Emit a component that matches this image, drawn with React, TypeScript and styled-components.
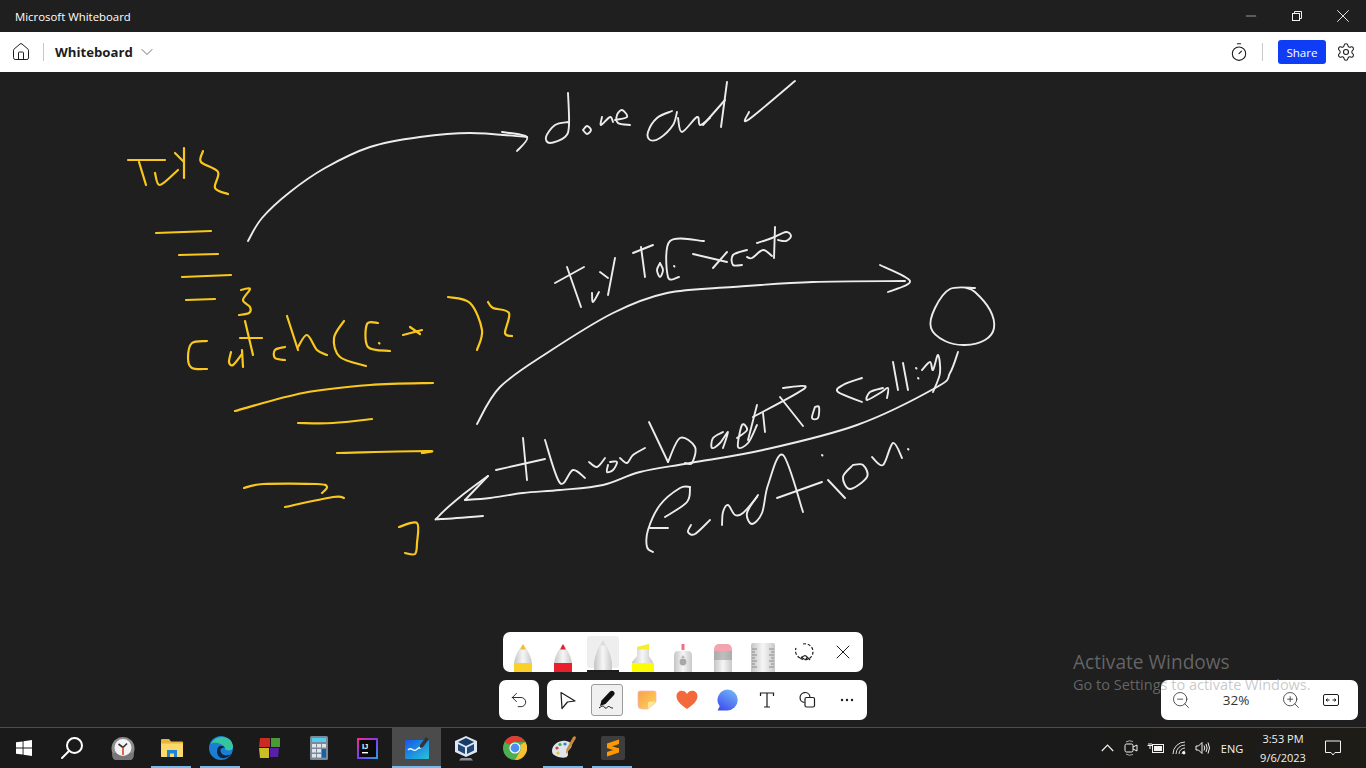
import React from "react";
import styled, { createGlobalStyle } from "styled-components";
import { ChevronDown, House, Minus, Settings, Timer, Undo2, X, ZoomIn, ZoomOut } from "lucide-react";

const GlobalStyle = createGlobalStyle`
  html, body { margin: 0; padding: 0; background: #1f1f1f; overflow: hidden; }
  * { box-sizing: border-box; }
`;

const FONT = `"Open Sans", "Noto Sans", "Liberation Sans", sans-serif`;

const Page = styled.div`
  width: 1366px;
  height: 768px;
  display: flex;
  flex-direction: column;
  font-family: ${FONT};
`;

const TitleBar = styled.div`
  height: 32px;
  flex: none;
  display: flex;
  align-items: center;
  justify-content: space-between;
  background: #1f1f1f;
  color: #fff;
  padding-left: 15px;
  font-size: 11.4px;
`;

const WindowButtons = styled.div`
  display: flex;
`;

const WindowButton = styled.div`
  width: 46px;
  height: 32px;
  display: flex;
  align-items: center;
  justify-content: center;
  color: ${(p: { $dim?: boolean }) => (p.$dim ? "#9a9a9a" : "#f2f2f2")};
`;

const AppBar = styled.div`
  height: 40px;
  flex: none;
  display: flex;
  align-items: center;
  background: #fff;
  color: #1c1c1c;
`;

const HomeButton = styled.div`
  width: 41px;
  display: flex;
  justify-content: center;
  margin-right: 2px;
`;

const BarDivider = styled.div`
  width: 1px;
  height: 18px;
  background: #c8c8c8;
`;

const BoardName = styled.div`
  margin-left: 11px;
  font-size: 13.2px;
  font-weight: 700;
`;

const ChevronWrap = styled.div`
  margin-left: 4px;
  display: flex;
  color: #555;
`;

const BarRight = styled.div`
  margin-left: auto;
  display: flex;
  align-items: center;
`;

const TimerWrap = styled.div`
  display: flex;
  margin-right: 13px;
`;

const ShareButton = styled.div`
  width: 48px;
  height: 24px;
  margin-left: 15px;
  border-radius: 3px;
  background: #0f3cf5;
  color: #fff;
  font-size: 11.6px;
  font-weight: 500;
  display: flex;
  align-items: center;
  justify-content: center;
`;

const GearWrap = styled.div`
  width: 40px;
  display: flex;
  justify-content: center;
`;

const Canvas = styled.div`
  flex: 1;
  position: relative;
  background: #1f1f1f;
  overflow: hidden;
`;

const InkLayer = styled.svg`
  position: absolute;
  inset: 0;
`;

const Dock = styled.div`
  position: absolute;
  left: 499px;
  bottom: 7px;
  width: 368px;
  display: flex;
  flex-direction: column;
  align-items: center;
  gap: 8px;
`;

const PenTray = styled.div`
  display: flex;
  height: 40px;
  background: #fff;
  border-radius: 7px;
  overflow: hidden;
`;

const PenSlot = styled.div<{ $active?: boolean }>`
  width: 40px;
  height: 40px;
  position: relative;
  display: flex;
  justify-content: center;
  &::before {
    content: "";
    display: ${(p) => (p.$active ? "block" : "none")};
    position: absolute;
    left: 4px;
    right: 4px;
    top: 4px;
    bottom: 4px;
    background: #eee;
    border-radius: 3px;
  }
  &::after {
    content: "";
    display: ${(p) => (p.$active ? "block" : "none")};
    position: absolute;
    left: 4px;
    right: 4px;
    bottom: 0;
    height: 2px;
    background: #1c1c1c;
  }
  svg {
    position: relative;
  }
`;

const ToolRow = styled.div`
  width: 100%;
  display: flex;
  justify-content: space-between;
`;

const Pill = styled.div`
  height: 40px;
  background: #fff;
  border-radius: 7px;
  display: flex;
`;

const ToolSlot = styled.div<{ $active?: boolean }>`
  width: 40px;
  height: 40px;
  display: flex;
  align-items: center;
  justify-content: center;
  color: #1c1c1c;
  position: relative;
  &::before {
    content: "";
    display: ${(p) => (p.$active ? "block" : "none")};
    position: absolute;
    left: 4px;
    right: 4px;
    top: 4px;
    bottom: 4px;
    background: #f0f0f0;
    border: 1px solid #9a9a9a;
    border-radius: 3px;
  }
  svg {
    position: relative;
  }
`;

const ZoomPanel = styled.div`
  position: absolute;
  right: 8px;
  bottom: 7px;
  width: 197px;
  height: 40px;
  background: #fff;
  border-radius: 7px;
  display: flex;
  align-items: center;
  color: #1c1c1c;
`;

const ZoomCell = styled.div<{ $width: number }>`
  width: ${(p) => p.$width}px;
  display: flex;
  justify-content: center;
  font-size: 13.5px;
  color: #333;
`;

const Watermark = styled.div`
  position: absolute;
  left: 1073px;
  top: 577px;
  color: rgba(157, 157, 157, 0.56);
  pointer-events: none;
`;

const WatermarkTitle = styled.div`
  font-size: 19.1px;
  line-height: 26px;
`;

const WatermarkText = styled.div`
  font-size: 14.5px;
  line-height: 19px;
  white-space: nowrap;
`;

const Taskbar = styled.div`
  height: 41px;
  flex: none;
  display: flex;
  align-items: stretch;
  background: #1a1a1a;
  border-top: 1px solid #4d4d4d;
  padding-left: 2px;
  color: #f2f2f2;
`;

const StartCell = styled.div`
  width: 48px;
  display: flex;
  align-items: center;
  justify-content: center;
  margin-left: -2px;
  &:nth-child(2) {
    margin-left: 0;
    margin-right: 2px;
  }
`;

const AppCell = styled.div<{ $open?: boolean; $active?: boolean }>`
  width: 49px;
  position: relative;
  display: flex;
  align-items: center;
  justify-content: center;
  background: ${(p) => (p.$active ? "#4b4b4b" : "transparent")};
  &::after {
    content: "";
    display: ${(p) => (p.$open || p.$active ? "block" : "none")};
    position: absolute;
    bottom: 0;
    height: 2px;
    left: ${(p) => (p.$active ? "0" : "4px")};
    right: ${(p) => (p.$active ? "0" : "5px")};
    background: #76b9ed;
  }
`;

const Tray = styled.div`
  margin-left: auto;
  display: flex;
  align-items: center;
  padding-right: 16px;
  background: linear-gradient(90deg, #1a1a1a, #1e1c16);
`;

const TrayIcon = styled.div<{ $width: number }>`
  width: ${(p) => p.$width}px;
  display: flex;
  justify-content: center;
`;

const TrayLang = styled.div`
  width: 36px;
  text-align: center;
  font-size: 11px;
`;

const TrayClock = styled.div`
  width: 66px;
  text-align: center;
  font-size: 11px;
  line-height: 19px;
`;

type Pt = number[];

// catmull-rom through the sampled pen points, so strokes look like ink
const smooth = (pts: Pt[]) => {
  let d = `M${pts[0][0]} ${pts[0][1]}`;
  for (let i = 0; i < pts.length - 1; i++) {
    const p0 = pts[i - 1] || pts[i];
    const p1 = pts[i];
    const p2 = pts[i + 1];
    const p3 = pts[i + 2] || p2;
    const c1x = p1[0] + (p2[0] - p0[0]) / 6;
    const c1y = p1[1] + (p2[1] - p0[1]) / 6;
    const c2x = p2[0] - (p3[0] - p1[0]) / 6;
    const c2y = p2[1] - (p3[1] - p1[1]) / 6;
    d += ` C${c1x.toFixed(1)} ${c1y.toFixed(1)} ${c2x.toFixed(1)} ${c2y.toFixed(1)} ${p2[0]} ${p2[1]}`;
  }
  return d;
};

const yellowInk: Pt[][] = [
  [[128, 160], [165, 160]],
  [[139, 162], [146, 185]],
  [[155, 173], [160, 185], [178, 170]],
  [[175, 153], [184, 162]],
  [[184, 148], [184, 178]],
  [[203, 151], [201, 162], [218, 172], [215, 188], [228, 194]],
  [[156, 233], [211, 231]],
  [[179, 255], [218, 254]],
  [[182, 277], [231, 275]],
  [[186, 300], [215, 299]],
  [[241, 290], [250, 289], [243, 300], [250, 307], [249, 313], [239, 315]],
  [[207, 341], [192, 343], [188, 358], [192, 368], [207, 369]],
  [[231, 352], [229, 362], [233, 365], [242, 354]],
  [[242, 350], [243, 367]],
  [[245, 321], [253, 355]],
  [[240, 338], [262, 338]],
  [[285, 347], [275, 350], [275, 358], [285, 360]],
  [[287, 316], [298, 350]],
  [[298, 347], [307, 335], [317, 350], [327, 355]],
  [[344, 321], [334, 338], [340, 357], [366, 366]],
  [[378, 323], [367, 324], [368, 347], [390, 351]],
  [[379, 343], [379.5, 343.5]],
  [[403, 335], [422, 330]],
  [[410, 327], [420, 334]],
  [[448, 297], [470, 303], [482, 330], [477, 350]],
  [[488, 302], [493, 308], [509, 313], [505, 333], [512, 336]],
  [[235, 411], [303, 393], [370, 385], [433, 383]],
  [[298, 423], [333, 423], [372, 419]],
  [[337, 453], [427, 451], [422, 453]],
  [[244, 488], [263, 484], [317, 484], [327, 487], [322, 493]],
  [[285, 507], [333, 497], [344, 498]],
  [[399, 527], [417, 523], [417, 543], [415, 554], [405, 553]],
];

const whiteInk: Pt[][] = [
  // done out
  [[248, 241], [262, 218], [290, 192], [325, 168], [370, 147], [420, 137], [470, 133], [527, 137]],
  [[502, 132], [527, 137], [517, 151]],
  [[568, 93], [569, 125], [565, 137], [550, 143], [546, 137], [555, 125], [568, 122]],
  [[583, 130], [587, 126], [591, 130], [587, 134], [583, 130]],
  [[602, 117], [601, 125], [610, 117], [613, 122]],
  [[615, 120], [627, 117], [622, 110], [617, 115], [618, 123], [630, 125]],
  [[672, 111], [657, 118], [648, 132], [650, 140], [660, 138], [673, 125], [677, 112]],
  [[678, 118], [682, 132], [697, 117], [700, 125], [710, 118]],
  [[727, 82], [721, 127]],
  [[703, 125], [725, 100]],
  [[749, 112], [748, 120], [795, 81]],
  // try to execute
  [[555, 283], [584, 267]],
  [[567, 267], [581, 307]],
  [[592, 293], [593, 302], [599, 292]],
  [[600, 272], [608, 278]],
  [[615, 258], [608, 295]],
  [[633, 253], [653, 245]],
  [[641, 247], [645, 277]],
  [[660, 263], [657, 270], [660, 277], [663, 270], [660, 263]],
  [[704, 241], [670, 241], [668, 277], [679, 277]],
  [[674, 266], [674.5, 266.5]],
  [[693, 254], [727, 262]],
  [[727, 252], [713, 268]],
  [[747, 250], [733, 255], [733, 265], [742, 265]],
  [[747, 257], [752, 258], [763, 250], [772, 256]],
  [[775, 227], [774, 258]],
  [[757, 243], [772, 238], [786, 232], [791, 236], [786, 241], [778, 240]],
  // long arrow
  [[477, 424], [500, 387], [547, 353], [613, 313], [667, 293], [733, 287], [813, 282], [905, 281]],
  [[880, 265], [910, 281], [888, 292]],
  [[975, 288], [950, 289], [935, 308], [931, 328], [945, 341], [965, 345], [985, 340], [994, 328], [990, 310], [975, 292], [966, 288]],
  // throw back
  [[958, 352], [950, 373], [937, 387], [857, 425], [763, 450], [690, 463], [640, 472], [603, 485], [560, 490], [523, 493], [490, 498], [465, 500]],
  [[465, 500], [488, 476]],
  [[488, 476], [460, 497], [438, 517], [441, 519], [483, 516]],
  [[496, 470], [545, 459]],
  [[523, 438], [527, 480]],
  [[545, 440], [560, 483], [573, 470], [585, 478]],
  [[589, 462], [597, 467], [605, 458]],
  [[608, 465], [607, 472], [613, 470], [617, 462], [610, 462]],
  [[620, 458], [627, 463], [633, 455], [645, 448]],
  [[649, 422], [668, 462]],
  [[668, 462], [680, 438], [695, 447], [692, 463], [685, 463]],
  [[723, 432], [713, 438], [712, 448], [720, 443], [728, 432], [723, 448]],
  [[737, 438], [747, 430], [742, 425], [738, 447], [748, 443], [757, 425]],
  [[757, 405], [748, 440]],
  [[763, 413], [765, 432]],
  [[783, 388], [805, 388], [753, 417]],
  [[780, 397], [803, 426]],
  [[815, 407], [812, 418], [818, 418], [819, 407], [815, 407]],
  [[862, 378], [843, 385], [838, 392], [862, 402]],
  [[883, 388], [870, 392], [867, 400], [880, 393], [888, 388], [887, 398]],
  [[893, 362], [898, 390]],
  [[903, 363], [908, 390]],
  [[916, 368], [916.5, 368.5]],
  [[918, 378], [918.5, 378.5]],
  [[922, 370], [930, 362], [933, 370], [938, 355], [940, 373], [933, 392]],
  // function
  [[690, 487], [680, 488], [660, 505], [648, 530], [647, 547], [653, 552]],
  [[690, 487], [687, 502], [665, 517]],
  [[650, 528], [668, 528]],
  [[691, 525], [688, 532], [695, 534], [710, 520]],
  [[722, 525], [723, 512], [728, 505], [735, 515], [743, 513], [757, 497]],
  [[758, 495], [747, 513], [752, 524], [762, 513], [768, 485], [783, 455], [803, 512]],
  [[777, 498], [822, 482]],
  [[828, 480], [845, 498]],
  [[822, 455], [822.5, 455.5]],
  [[853, 465], [843, 477], [850, 489], [867, 477], [863, 465], [853, 465]],
  [[872, 457], [883, 465], [893, 443], [902, 458]],
  [[908, 449], [908.5, 449.5]],
];

const Ink = () => (
  <InkLayer width="1366" height="655" viewBox="0 72 1366 655" fill="none" strokeLinecap="round" strokeLinejoin="round">
    {yellowInk.map((s, i) => (
      <path key={i} d={smooth(s)} stroke="#f9c81e" strokeWidth="2.2" />
    ))}
    {whiteInk.map((s, i) => (
      <path key={i} d={smooth(s)} stroke="#ececec" strokeWidth="1.9" />
    ))}
  </InkLayer>
);

const SharedDefs = () => (
  <defs>
    <linearGradient id="penBody" x1="0" x2="1" y1="0" y2="0">
      <stop offset="0" stopColor="#c4c4c4" />
      <stop offset="0.5" stopColor="#f6f6f6" />
      <stop offset="1" stopColor="#c8c8c8" />
    </linearGradient>
    <linearGradient id="noteFill" x1="0" x2="1" y1="0" y2="1">
      <stop offset="0" stopColor="#f9a14a" />
      <stop offset="1" stopColor="#ffd35c" />
    </linearGradient>
    <linearGradient id="bubbleFill" x1="0.8" x2="0.2" y1="0" y2="1">
      <stop offset="0" stopColor="#72b7f5" />
      <stop offset="1" stopColor="#3e4ef0" />
    </linearGradient>
    <linearGradient id="boardFill" x1="0" x2="1" y1="0" y2="1">
      <stop offset="0" stopColor="#1558e8" />
      <stop offset="1" stopColor="#28c3d8" />
    </linearGradient>
  </defs>
);

const PenTip = ({ tip, band, top = 12 }: { tip: string; band: string; top?: number }) => (
  <svg width="40" height="40" viewBox="0 0 40 40">
    <path d={`M11 40 V33 C11 25 16 ${top + 5} 20 ${top} C24 ${top + 5} 29 25 29 33 V40Z`} fill="url(#penBody)" />
    <path d={`M17.2 ${top + 5.5} Q18.6 ${top + 2} 20 ${top} Q21.4 ${top + 2} 22.8 ${top + 5.5}Z`} fill={tip} />
    <path d="M11 31 H29 V40 H11Z" fill={band} />
  </svg>
);

const Highlighter = () => (
  <svg width="40" height="40" viewBox="0 0 40 40">
    <path d="M14 24 V15 L26 12 V24 L30 30 V40 H9 V30Z" fill="url(#penBody)" />
    <path d="M14 18 V15 L26 12 V17Z" fill="#f5ee2a" />
    <path d="M9 31 H31 V40 H9Z" fill="#fdfd00" />
  </svg>
);

const Laser = () => (
  <svg width="40" height="40" viewBox="0 0 40 40">
    <path d="M18.5 12 h3 v6 h-3Z" fill="#f04a66" opacity="0.8" />
    <path d="M11 40 V24 Q11 19 15 19 H25 Q29 19 29 24 V40Z" fill="url(#penBody)" />
    <circle cx="20" cy="30" r="3.4" fill="#a8a8a8" />
    <path d="M20 23 l2 3 h-4Z" fill="#b5b5b5" />
  </svg>
);

const Eraser = () => (
  <svg width="40" height="40" viewBox="0 0 40 40">
    <path d="M11 19 Q11 12 16 12 H24 Q29 12 29 19 V40 H11Z" fill="url(#penBody)" />
    <path d="M11 19 Q11 12 16 12 H24 Q29 12 29 19Z" fill="#f4a4ae" />
    <path d="M11 19 H29 V28 H11Z" fill="#9a9a9a" opacity="0.6" />
  </svg>
);

const Ruler = () => (
  <svg width="40" height="40" viewBox="0 0 40 40" stroke="#8c8c8c" strokeWidth="1">
    <path d="M8 13 Q8 11 10 11 H30 Q32 11 32 13 V40 H8Z" fill="url(#penBody)" stroke="none" />
    {[17, 20, 23, 26, 29, 32, 35].map((y) => (
      <path key={y} d={`M9 ${y} h${y % 2 ? 5 : 3} M31 ${y} h-${y % 2 ? 5 : 3}`} />
    ))}
  </svg>
);

const Lasso = () => (
  <svg width="22" height="22" viewBox="0 0 22 22" fill="none" stroke="#1c1c1c" strokeWidth="1.2">
    <path d="M11 3 A8 8 0 1 1 8 17" strokeDasharray="3 1.8" />
    <path d="M8 17 A8 8 0 0 1 4 7" strokeDasharray="3 1.8" />
    <path d="M9 17 Q13 13 15 16 Q15 19 12 18 L9 16 M15 16 L18 19" />
  </svg>
);

const CursorIcon = () => (
  <svg width="20" height="20" viewBox="0 0 20 20" fill="none" stroke="#1c1c1c" strokeWidth="1.2" strokeLinejoin="round">
    <path d="M4 2.5 L18 11 L10.5 12 L5 18.5Z" />
  </svg>
);

const InkPenIcon = () => (
  <svg width="20" height="20" viewBox="0 0 20 20" fill="none">
    <path d="M13 1.5 C15.5 -0.5 19 2.5 17 5 L8.5 14 L3 16 L4.5 10.5Z" fill="#111" />
    <path d="M2 18 C6 15 7 16 8 18 C10 19 11 15 13 17 C14 18 15 18 16 18" stroke="#111" strokeWidth="1" />
  </svg>
);

const NoteIcon = () => (
  <svg width="20" height="20" viewBox="0 0 20 20">
    <path d="M3 1 H17 Q19 1 19 3 V12 L11 19 H5 Q1 19 1 15 V3 Q1 1 3 1Z" fill="url(#noteFill)" stroke="#f3b6c2" strokeWidth="0.8" />
    <path d="M11 19 V13 Q11 11.5 13 11.5 H19Z" fill="#ffe79a" />
  </svg>
);

const HeartIcon = () => (
  <svg width="22" height="20" viewBox="0 0 22 20">
    <path d="M11 19 C4 14 0.5 10.5 0.5 6.2 C0.5 2.8 3.2 0.8 5.8 0.8 C8 0.8 9.8 2 11 4 C12.2 2 14 0.8 16.2 0.8 C18.8 0.8 21.5 2.8 21.5 6.2 C21.5 10.5 18 14 11 19Z" fill="#f4693c" />
  </svg>
);

const BubbleIcon = () => (
  <svg width="22" height="22" viewBox="0 0 21 21">
    <path d="M11 0.5 A10 10 0 1 1 10.5 20.5 H1.5 L3.5 16.5 A10 10 0 0 1 11 0.5Z" fill="url(#bubbleFill)" />
  </svg>
);

const SerifT = () => (
  <svg width="18" height="18" viewBox="0 0 18 18" fill="none" stroke="#1c1c1c" strokeWidth="1.2">
    <path d="M2.5 5 V2 H15.5 V5 M9 2 V16 M6 16 H12" />
  </svg>
);

const ShapesIcon = () => (
  <svg width="18" height="18" viewBox="0 0 18 18" fill="none" stroke="#1c1c1c" strokeWidth="1.2">
    <path d="M6.5 11.5 A5 5 0 1 1 12 5.8" />
    <rect x="7" y="6.5" width="9.5" height="9.5" rx="1.5" />
  </svg>
);

const DotsIcon = () => (
  <svg width="14" height="4" viewBox="0 0 14 4" fill="#1c1c1c">
    <circle cx="2" cy="2" r="1.2" />
    <circle cx="7" cy="2" r="1.2" />
    <circle cx="12" cy="2" r="1.2" />
  </svg>
);

const FitIcon = () => (
  <svg width="16" height="12" viewBox="0 0 16 12" fill="none" stroke="#1c1c1c" strokeWidth="1">
    <rect x="0.5" y="0.5" width="15" height="11" rx="1.5" />
    <path d="M3 6 H6.5 M3 6 L4.6 4.6 M3 6 L4.6 7.4 M13 6 H9.5 M13 6 L11.4 4.6 M13 6 L11.4 7.4" />
  </svg>
);

const RestoreIcon = () => (
  <svg width="10" height="10" viewBox="0 0 10 10" fill="none" stroke="currentColor" strokeWidth="1">
    <rect x="0.5" y="2.5" width="7" height="7" />
    <path d="M2.5 2.5 V0.5 H9.5 V7.5 H7.5" />
  </svg>
);

const WindowsLogo = () => (
  <svg width="16" height="16" viewBox="0 0 16 16" fill="#fff">
    <path d="M0 2.3 L6.6 1.4 V7.5 H0Z M7.5 1.2 L16 0 V7.5 H7.5Z M0 8.4 H6.6 V14.6 L0 13.7Z M7.5 8.4 H16 V16 L7.5 14.8Z" />
  </svg>
);

const SearchIcon = () => (
  <svg width="24" height="24" viewBox="0 0 24 24" fill="none" stroke="#fff" strokeWidth="2">
    <circle cx="14.5" cy="9.5" r="7.5" />
    <path d="M9 15 L2 22" strokeLinecap="round" />
  </svg>
);

const ClockApp = () => (
  <svg width="24" height="24" viewBox="0 0 24 24">
    <circle cx="12" cy="12.5" r="11.5" fill="#8d8d8d" />
    <path d="M1 17 H23 Q23 23 20 24 H4 Q1 23 1 17Z" fill="#777" />
    <circle cx="12" cy="11.5" r="8.5" fill="#f4f4f4" />
    <path d="M12 11.5 L7.5 8 M12 11.5 L16 7.5" stroke="#333" strokeWidth="1.6" />
    <path d="M12 11.5 V19" stroke="#d8432a" strokeWidth="1.6" />
  </svg>
);

const FolderApp = () => (
  <svg width="22" height="20" viewBox="0 0 22 20">
    <path d="M0 2 Q0 1 1 1 H8 L10 3.5 H21 Q22 3.5 22 4.5 V18 Q22 19 21 19 H1 Q0 19 0 18Z" fill="#e8b53c" />
    <path d="M0 5.5 H22 V18 Q22 19 21 19 H1 Q0 19 0 18Z" fill="#fbd96b" />
    <path d="M6 12 H16 V19 H13 V15.5 H9 V19 H6Z" fill="#1b86d8" />
  </svg>
);

const EdgeApp = () => (
  <svg width="24" height="24" viewBox="0 0 24 24">
    <circle cx="12" cy="12" r="12" fill="#1a7fd4" />
    <path d="M2 8 C5 1 14 -1 20 3 C24 6 25 12 22 14 C19 15 16 14 16 12 C15 8 6 5 2 8Z" fill="#35c6a0" />
    <path d="M8 15 C8 10 13 8 16 12 C14 11 11 12 11.5 15 C12 19 17 21 22 18 C19 23 8 25 8 15Z" fill="#10243f" />
    <path d="M22 14 C23 12 24 9 22 6 C24 9 24 12 22 14Z" fill="#7be06b" />
  </svg>
);

const TilesApp = () => (
  <svg width="22" height="22" viewBox="0 0 22 22">
    <path d="M1 1 H11 V10 H0Z" fill="#c92b22" />
    <path d="M12 1 H21 V10 H12Z" fill="#4c9a34" />
    <path d="M0 11 H10 V21 H1Z" fill="#c9bf24" />
    <path d="M11 11 H20 L19 20 H11Z" fill="#5a1fa8" />
  </svg>
);

const CalcApp = () => (
  <svg width="18" height="24" viewBox="0 0 18 24">
    <rect width="18" height="24" rx="1.5" fill="#7b8a96" />
    <rect x="2" y="2" width="14" height="4" fill="#52cdf0" />
    <path d="M2 8 h4 v3.5 h-4Z M7 8 h4 v3.5 h-4Z M2 13 h4 v3.5 h-4Z M7 13 h4 v3.5 h-4Z M2 18 h4 v3.5 h-4Z M7 18 h4 v3.5 h-4Z M12 8 h4 v3.5 h-4Z" fill="#dde4ea" />
    <rect x="12" y="13" width="4" height="8.5" fill="#1562a8" />
  </svg>
);

const IntellijApp = () => (
  <svg width="21" height="21" viewBox="0 0 21 21">
    <defs>
      <linearGradient id="ijEdge" x1="0" x2="1" y1="0" y2="1">
        <stop offset="0" stopColor="#fc2d7f" />
        <stop offset="0.5" stopColor="#7b3cf0" />
        <stop offset="1" stopColor="#2b9fe8" />
      </linearGradient>
    </defs>
    <rect width="21" height="21" fill="url(#ijEdge)" />
    <rect x="2" y="2" width="17" height="17" fill="#0a0a0a" />
    <text x="5" y="10.5" fontFamily="Liberation Sans, sans-serif" fontWeight="700" fontSize="7.5" fill="#fff">IJ</text>
    <rect x="5" y="14" width="6" height="1.4" fill="#fff" />
  </svg>
);

const BoardApp = () => (
  <svg width="26" height="24" viewBox="0 0 26 24">
    <rect x="1" y="4" width="24" height="19" rx="1" fill="url(#boardFill)" />
    <path d="M4 14 C7 10 9 16 12 14 C15 12 14 11 17 12" fill="none" stroke="#fff" strokeWidth="1.4" />
    <path d="M16 9 L22 1 L25 3 L19 11 L16 12Z" fill="#333" />
  </svg>
);

const VboxApp = () => (
  <svg width="24" height="26" viewBox="0 0 24 26">
    <path d="M12 1 L23 6 V17 L12 22 L1 17 V6Z" fill="#dfe6f0" />
    <path d="M12 3 L20 7 L12 11 L4 7Z" fill="#173a66" />
    <path d="M4 9 L11 12.5 V19 L4 15.5Z M13 12.5 L20 9 V15.5 L13 19Z" fill="#1f4778" />
    <path d="M7 23 H17 L19 25.5 H5Z" fill="#8a8f98" />
  </svg>
);

const ChromeApp = () => (
  <svg width="24" height="24" viewBox="0 0 24 24">
    <circle cx="12" cy="12" r="12" fill="#4caf50" />
    <path d="M12 0 A12 12 0 0 1 22.4 6 H12 A6 6 0 0 0 6.8 9 L1.6 6 A12 12 0 0 1 12 0Z" fill="#e53935" />
    <path d="M22.4 6 A12 12 0 0 1 12 24 L17.2 15 A6 6 0 0 0 17.2 9 Z" fill="#fbc02d" />
    <circle cx="12" cy="12" r="5.6" fill="#fff" />
    <circle cx="12" cy="12" r="4.4" fill="#4d8ff0" />
  </svg>
);

const PaintApp = () => (
  <svg width="26" height="26" viewBox="0 0 26 26">
    <path d="M1 16 C1 9 9 5 15 6 C21 7 22 11 19 14 C16 16 17 18 17 20 C16 24 9 23 5 21 C2 20 1 18 1 16Z" fill="#dfe5ea" />
    <circle cx="6" cy="13" r="1.6" fill="#d83a3a" />
    <circle cx="9" cy="9.5" r="1.6" fill="#3ab04a" />
    <circle cx="14" cy="9" r="1.6" fill="#2f7fd6" />
    <circle cx="7" cy="18" r="1.6" fill="#e8c23a" />
    <path d="M24 1 L25 3 L18 15 L15 19 L15.5 14 L22 2Z" fill="#c98a3e" />
  </svg>
);

const SublimeApp = () => (
  <svg width="24" height="24" viewBox="0 0 24 24">
    <rect width="24" height="24" rx="2" fill="#3d3d3d" />
    <path d="M6 7.5 L18 3.5 V8 L6 12Z M6 8.5 L18 12.5 V16 L6 12Z M6 16 L18 12 V16.5 L6 20.5Z" fill="#ff9800" />
  </svg>
);

const MeetIcon = () => (
  <svg width="14" height="18" viewBox="0 0 14 18" fill="none" stroke="#f2f2f2" strokeWidth="1">
    <rect x="1" y="5" width="8" height="8" rx="1.5" />
    <path d="M9 8 L13 6 V12 L9 10" />
    <path d="M2 3 Q5 0.8 9 2.5 M2 15 Q5 17.2 9 15.5" stroke="#aaa" />
  </svg>
);

const BatteryIcon = () => (
  <svg width="17" height="12" viewBox="0 0 17 12" fill="none" stroke="#f2f2f2" strokeWidth="1">
    <rect x="5.5" y="2.5" width="11" height="8" />
    <rect x="7" y="4" width="8" height="5" fill="#f2f2f2" stroke="none" />
    <path d="M0.5 3.5 H5.5 M2 1 V3.5 M4 1 V3.5 M3 3.5 V7" />
  </svg>
);

const WifiIcon = () => (
  <svg width="14" height="14" viewBox="0 0 14 14" fill="none" stroke="#dcdcdc" strokeWidth="1">
    <path d="M1 13 A12 12 0 0 1 13 1 M4 13 A9 9 0 0 1 13 4 M7 13 A6 6 0 0 1 13 7 M10 13 A3 3 0 0 1 13 10" />
    <circle cx="12" cy="12" r="1.4" fill="#f2f2f2" stroke="none" />
  </svg>
);

const VolumeIcon = () => (
  <svg width="16" height="14" viewBox="0 0 16 14" fill="none" stroke="#f2f2f2" strokeWidth="1">
    <path d="M1 5 H3.5 L7 1.5 V12.5 L3.5 9 H1Z" />
    <path d="M9 4.5 Q10.5 7 9 9.5 M11 3 Q13.2 7 11 11 M13 1.5 Q16 7 13 12.5" />
  </svg>
);

const CaretIcon = () => (
  <svg width="13" height="8" viewBox="0 0 13 8" fill="none" stroke="#f2f2f2" strokeWidth="1.2">
    <path d="M0.8 7 L6.5 1.2 L12.2 7" />
  </svg>
);

const ActionCenter = () => (
  <svg width="16" height="16" viewBox="0 0 16 16" fill="none" stroke="#f2f2f2" strokeWidth="1">
    <path d="M0.5 1 H15.5 V12.5 H10 L8 15 L6 12.5 H0.5Z" />
  </svg>
);

const pens = [
  { key: "pen1", el: <PenTip tip="#f0c020" band="#fcd02a" /> },
  { key: "pen2", el: <PenTip tip="#e01f2e" band="#e8202e" /> },
  { key: "pen3", el: <PenTip tip="#dcdcdc" band="transparent" top={8} />, active: true },
  { key: "marker", el: <Highlighter /> },
  { key: "laser", el: <Laser /> },
  { key: "eraser", el: <Eraser /> },
  { key: "ruler", el: <Ruler /> },
];

const tools = [
  { key: "select", el: <CursorIcon /> },
  { key: "ink", el: <InkPenIcon />, active: true },
  { key: "note", el: <NoteIcon /> },
  { key: "heart", el: <HeartIcon /> },
  { key: "bubble", el: <BubbleIcon /> },
  { key: "text", el: <SerifT /> },
  { key: "shapes", el: <ShapesIcon /> },
  { key: "more", el: <DotsIcon /> },
];

const apps = [
  { key: "clock", el: <ClockApp /> },
  { key: "files", el: <FolderApp />, open: true },
  { key: "edge", el: <EdgeApp />, open: true },
  { key: "tiles", el: <TilesApp /> },
  { key: "calc", el: <CalcApp /> },
  { key: "ij", el: <IntellijApp /> },
  { key: "board", el: <BoardApp />, active: true },
  { key: "vbox", el: <VboxApp /> },
  { key: "chrome", el: <ChromeApp /> },
  { key: "paint", el: <PaintApp />, open: true },
  { key: "sublime", el: <SublimeApp />, open: true },
];

const App = () => {
  return (
    <Page>
      <GlobalStyle />
      <svg width="0" height="0" style={{ position: "absolute" }}>
        <SharedDefs />
      </svg>
      <TitleBar>
        Microsoft Whiteboard
        <WindowButtons>
          <WindowButton $dim>
            <Minus size={16} strokeWidth={1.8} />
          </WindowButton>
          <WindowButton>
            <RestoreIcon />
          </WindowButton>
          <WindowButton>
            <X size={22} strokeWidth={1} />
          </WindowButton>
        </WindowButtons>
      </TitleBar>
      <AppBar>
        <HomeButton>
          <House size={20} strokeWidth={1.2} />
        </HomeButton>
        <BarDivider />
        <BoardName>Whiteboard</BoardName>
        <ChevronWrap>
          <ChevronDown size={20} strokeWidth={1} />
        </ChevronWrap>
        <BarRight>
          <TimerWrap>
            <Timer size={20} strokeWidth={1.3} />
          </TimerWrap>
          <BarDivider />
          <ShareButton>Share</ShareButton>
          <GearWrap>
            <Settings size={20} strokeWidth={1.3} />
          </GearWrap>
        </BarRight>
      </AppBar>
      <Canvas>
        <Ink />
        <Dock>
          <PenTray>
            {pens.map((p) => (
              <PenSlot key={p.key} $active={p.active}>
                {p.el}
              </PenSlot>
            ))}
            <ToolSlot>
              <Lasso />
            </ToolSlot>
            <ToolSlot>
              <X size={24} strokeWidth={1} />
            </ToolSlot>
          </PenTray>
          <ToolRow>
            <Pill>
              <ToolSlot>
                <Undo2 size={20} strokeWidth={1.1} />
              </ToolSlot>
            </Pill>
            <Pill>
              {tools.map((t) => (
                <ToolSlot key={t.key} $active={t.active}>
                  {t.el}
                </ToolSlot>
              ))}
            </Pill>
          </ToolRow>
        </Dock>
        <ZoomPanel>
          <ZoomCell $width={40}>
            <ZoomOut size={20} strokeWidth={1} />
          </ZoomCell>
          <ZoomCell $width={70}>32%</ZoomCell>
          <ZoomCell $width={40}>
            <ZoomIn size={20} strokeWidth={1} />
          </ZoomCell>
          <ZoomCell $width={40}>
            <FitIcon />
          </ZoomCell>
        </ZoomPanel>
        <Watermark>
          <WatermarkTitle>Activate Windows</WatermarkTitle>
          <WatermarkText>Go to Settings to activate Windows.</WatermarkText>
        </Watermark>
      </Canvas>
      <Taskbar>
        <StartCell>
          <WindowsLogo />
        </StartCell>
        <StartCell>
          <SearchIcon />
        </StartCell>
        {apps.map((a) => (
          <AppCell key={a.key} $open={a.open} $active={a.active}>
            {a.el}
          </AppCell>
        ))}
        <Tray>
          <TrayIcon $width={24}>
            <CaretIcon />
          </TrayIcon>
          <TrayIcon $width={24}>
            <MeetIcon />
          </TrayIcon>
          <TrayIcon $width={24}>
            <BatteryIcon />
          </TrayIcon>
          <TrayIcon $width={24}>
            <WifiIcon />
          </TrayIcon>
          <TrayIcon $width={23}>
            <VolumeIcon />
          </TrayIcon>
          <TrayLang>ENG</TrayLang>
          <TrayClock>
            3:53 PM
            <br />
            9/6/2023
          </TrayClock>
          <TrayIcon $width={34}>
            <ActionCenter />
          </TrayIcon>
        </Tray>
      </Taskbar>
    </Page>
  );
};

export default App;
